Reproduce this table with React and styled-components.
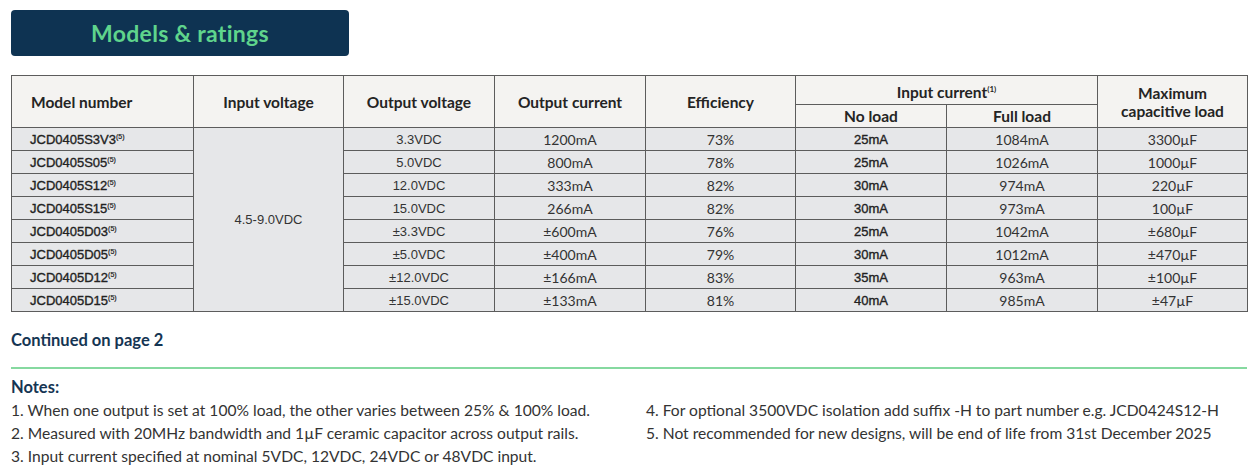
import React from "react";
import styled, { createGlobalStyle } from "styled-components";

const GlobalStyle = createGlobalStyle`
  html, body {
    margin: 0;
    padding: 0;
    background: #ffffff;
  }
  body {
    font-family: Lato, "Liberation Sans", sans-serif;
    color: #2b2b2b;
  }
`;

const Page = styled.div`
  width: 1260px;
  padding: 10px 13px 0 11px;
  box-sizing: border-box;
`;

const TitleBar = styled.div`
  width: 338px;
  height: 46px;
  background: #0e3352;
  border-radius: 4px;
  display: flex;
  align-items: center;
  justify-content: center;
  color: #5fd48c;
  font-family: Lato, sans-serif;
  font-weight: 700;
  font-size: 23px;
  letter-spacing: 0.3px;
`;

const Table = styled.table`
  margin-top: 19px;
  width: 1236px;
  border-collapse: collapse;
  table-layout: fixed;
  border: 1.5px solid #4a4a4a;
`;

const HeadCell = styled.th`
  background: #f4f3f1;
  border: 1px solid #5c5c5c;
  font-family: Lato, sans-serif;
  font-weight: 700;
  font-size: 15.5px;
  line-height: 18px;
  color: #242424;
  text-align: ${p => (p.$left ? "left" : "center")};
  padding: ${p => (p.$left ? "0 0 0 19px" : "0")};
  height: ${p => p.$h || 22}px;
  vertical-align: middle;
  sup {
    font-size: 8px;
    vertical-align: 6px;
    font-weight: 700;
  }
`;

const Cell = styled.td`
  background: #e6e7e9;
  border: 1px solid #5c5c5c;
  height: 22px;
  padding: ${p => (p.$left ? "0 0 0 18px" : "0")};
  text-align: ${p => (p.$left ? "left" : "center")};
  font-family: ${p => (p.$lato ? "Lato, sans-serif" : '"Liberation Sans", Arial, sans-serif')};
  font-size: ${p => (p.$lato ? 14 : 13)}px;
  font-weight: 400;
  -webkit-text-stroke: ${p => (p.$strong ? "0.35px #222" : "0")};
  color: ${p => (p.$strong ? "#222222" : "#333333")};
  vertical-align: middle;
  sup {
    font-size: 7px;
    vertical-align: 5px;
    -webkit-text-stroke: 0.2px #222;
  }
`;

const Continued = styled.div`
  margin-top: 18px;
  font-family: Lato, sans-serif;
  font-weight: 700;
  font-size: 16.5px;
  color: #153553;
`;

const Rule = styled.div`
  margin-top: 17px;
  width: 1236px;
  height: 1.5px;
  background: #86d9a0;
`;

const NotesTitle = styled.div`
  margin-top: 8px;
  font-family: Lato, sans-serif;
  font-weight: 700;
  font-size: 16.5px;
  color: #153553;
`;

const NotesGrid = styled.div`
  display: grid;
  grid-template-columns: 635px 1fr;
  margin-top: 2px;
`;

const NoteCol = styled.div`
  display: flex;
  flex-direction: column;
`;

const Note = styled.div`
  font-family: Lato, sans-serif;
  font-size: 15.6px;
  line-height: 23px;
  color: #333333;
  white-space: nowrap;
`;

const rows = [
  ["JCD0405S3V3", "3.3VDC", "1200mA", "73%", "25mA", "1084mA", "3300µF"],
  ["JCD0405S05", "5.0VDC", "800mA", "78%", "25mA", "1026mA", "1000µF"],
  ["JCD0405S12", "12.0VDC", "333mA", "82%", "30mA", "974mA", "220µF"],
  ["JCD0405S15", "15.0VDC", "266mA", "82%", "30mA", "973mA", "100µF"],
  ["JCD0405D03", "±3.3VDC", "±600mA", "76%", "25mA", "1042mA", "±680µF"],
  ["JCD0405D05", "±5.0VDC", "±400mA", "79%", "30mA", "1012mA", "±470µF"],
  ["JCD0405D12", "±12.0VDC", "±166mA", "83%", "35mA", "963mA", "±100µF"],
  ["JCD0405D15", "±15.0VDC", "±133mA", "81%", "40mA", "985mA", "±47µF"],
];

const widths = [182, 150, 151, 151, 150, 151, 151, 150];

export default function App() {
  return (
    <>
      <GlobalStyle />
      <Page>
        <TitleBar>Models &amp; ratings</TitleBar>
        <Table>
          <colgroup>
            {widths.map((w, i) => (
              <col key={i} style={{ width: w }} />
            ))}
          </colgroup>
          <thead>
            <tr>
              <HeadCell rowSpan={2} $left>Model number</HeadCell>
              <HeadCell rowSpan={2}>Input voltage</HeadCell>
              <HeadCell rowSpan={2}>Output voltage</HeadCell>
              <HeadCell rowSpan={2}>Output current</HeadCell>
              <HeadCell rowSpan={2}>Efficiency</HeadCell>
              <HeadCell colSpan={2} $h={28}>
                Input current<sup>(1)</sup>
              </HeadCell>
              <HeadCell rowSpan={2}>
                Maximum
                <br />
                capacitive load
              </HeadCell>
            </tr>
            <tr>
              <HeadCell $h={22}>No load</HeadCell>
              <HeadCell $h={22}>Full load</HeadCell>
            </tr>
          </thead>
          <tbody>
            {rows.map((r, i) => (
              <tr key={r[0]}>
                <Cell $left $strong>
                  {r[0]}
                  <sup>(5)</sup>
                </Cell>
                {i === 0 && <Cell rowSpan={8}>4.5-9.0VDC</Cell>}
                <Cell>{r[1]}</Cell>
                <Cell $lato>{r[2]}</Cell>
                <Cell $lato>{r[3]}</Cell>
                <Cell $strong>{r[4]}</Cell>
                <Cell $lato>{r[5]}</Cell>
                <Cell $lato>{r[6]}</Cell>
              </tr>
            ))}
          </tbody>
        </Table>
        <Continued>Continued on page 2</Continued>
        <Rule />
        <NotesTitle>Notes:</NotesTitle>
        <NotesGrid>
          <NoteCol>
            <Note>1. When one output is set at 100% load, the other varies between 25% &amp; 100% load.</Note>
            <Note>2. Measured with 20MHz bandwidth and 1µF ceramic capacitor across output rails.</Note>
            <Note>3. Input current specified at nominal 5VDC, 12VDC, 24VDC or 48VDC input.</Note>
          </NoteCol>
          <NoteCol>
            <Note>4. For optional 3500VDC isolation add suffix -H to part number e.g. JCD0424S12-H</Note>
            <Note>5. Not recommended for new designs, will be end of life from 31st December 2025</Note>
          </NoteCol>
        </NotesGrid>
      </Page>
    </>
  );
}
